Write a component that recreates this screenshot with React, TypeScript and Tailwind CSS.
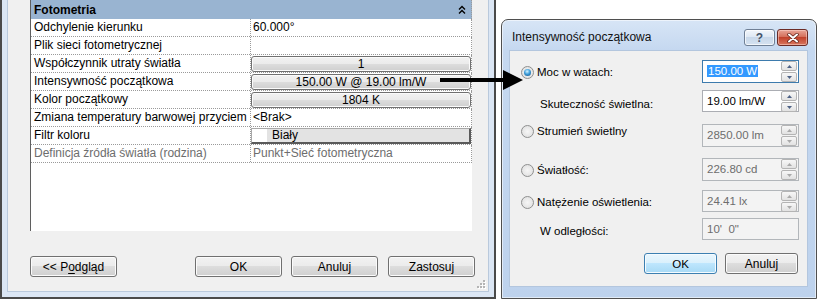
import React from "react";

const winBtn =
  "flex items-center justify-center border border-[#707070] rounded-[3px] bg-[linear-gradient(to_bottom,#f2f2f2_0%,#ebebeb_50%,#dddddd_50%,#cfcfcf_100%)] shadow-[inset_0_0_0_1px_#fbfbfb] text-[12px] leading-[14px] text-black";

type Row = { label: string; value: string; kind: "text" | "button" | "swatch" | "grey" };

const rows: Row[] = [
  { label: "Odchylenie kierunku", value: "60.000°", kind: "text" },
  { label: "Plik sieci fotometrycznej", value: "", kind: "text" },
  { label: "Współczynnik utraty światła", value: "1", kind: "button" },
  { label: "Intensywność początkowa", value: "150.00 W @ 19.00 lm/W", kind: "button" },
  { label: "Kolor początkowy", value: "1804 K", kind: "button" },
  { label: "Zmiana temperatury barwowej przyciem", value: "<Brak>", kind: "text" },
  { label: "Filtr koloru", value: "Biały", kind: "swatch" },
  { label: "Definicja źródła światła (rodzina)", value: "Punkt+Sieć fotometryczna", kind: "grey" },
];

function PropRow({ r }: { r: Row }) {
  const grey = r.kind === "grey";
  return (
    <div className="flex h-[18px] border-b border-r border-dotted border-[#9a9a9a]">
      <div
        className={`w-[220px] shrink-0 border-r border-dotted border-[#9a9a9a] pl-[3px] text-[12px] leading-[17px] whitespace-nowrap overflow-hidden ${
          grey ? "text-[#6d6d6d]" : "text-black"
        }`}
      >
        {r.label}
      </div>
      <div className="flex-1 min-w-0">
        {r.kind === "text" && (
          <div className="pl-[2px] text-[12px] leading-[17px] text-black whitespace-nowrap">{r.value}</div>
        )}
        {r.kind === "grey" && (
          <div className="pl-[2px] text-[12px] leading-[17px] text-[#6d6d6d] whitespace-nowrap">{r.value}</div>
        )}
        {r.kind === "button" && (
          <div className="pt-[1px]">
            <div className={`${winBtn} h-[16px] text-[12px]`}>{r.value}</div>
          </div>
        )}
        {r.kind === "swatch" && (
          <div className="pt-[1px]">
            <div className="flex h-[16px] border-t border-l border-[#a8a8a8] border-b-2 border-r-2 border-b-[#5a5a5a] border-r-[#5a5a5a] bg-[#e3e3e3]">
              <div className="w-[15px] h-full bg-white" />
              <div className="pl-[5px] text-[12px] leading-[13px] text-black">{r.value}</div>
            </div>
          </div>
        )}
      </div>
    </div>
  );
}

function LeftWindow() {
  return (
    <div className="w-[496px] h-[299px] shrink-0 border-l-2 border-r-2 border-b-2 border-[#4a4a4a] bg-[#dbe6f4] flex flex-col px-[5px] pb-[5px]">
      <div className="relative flex-1 bg-[#f0f0f0] border-l border-r border-b border-[#b9c9dc] flex flex-col">
        <div className="ml-[22px] w-[442px] h-[231px] bg-white border-l border-[#5f5f5f] flex flex-col">
          <div className="h-[19px] bg-[#99b4d1] flex items-center pl-[3px] pr-[5px] border-r border-dotted border-[#9a9a9a]">
            <span className="text-[12px] font-bold leading-[14px] text-black">Fotometria</span>
            <svg className="ml-auto" width="8" height="9" viewBox="0 0 8 9">
              <polyline points="1,4.5 4,1.5 7,4.5" fill="none" stroke="#000" strokeWidth="1.4" />
              <polyline points="1,8.5 4,5.5 7,8.5" fill="none" stroke="#000" strokeWidth="1.4" />
            </svg>
          </div>
          {rows.map((r, i) => (
            <PropRow key={i} r={r} />
          ))}
        </div>
        <div className="mt-[25px] flex h-[21px]">
          <div className={`${winBtn} ml-[22px] w-[87px]`}>
            &lt;&lt; P<span className="underline underline-offset-2">o</span>dgląd
          </div>
          <div className={`${winBtn} ml-[78px] w-[87px]`}>OK</div>
          <div className={`${winBtn} ml-[9px] w-[87px]`}>Anuluj</div>
          <div className={`${winBtn} ml-[10px] w-[87px]`}>Zastosuj</div>
        </div>
        <svg className="absolute right-[2px] bottom-[2px]" width="9" height="9" viewBox="0 0 9 9">
          {[
            [6, 0],
            [3, 3],
            [6, 3],
            [0, 6],
            [3, 6],
            [6, 6],
          ].map(([x, y], i) => (
            <g key={i}>
              <rect x={x + 1} y={y + 1} width="2" height="2" fill="#ffffff" />
              <rect x={x} y={y} width="2" height="2" fill="#b4b4b4" />
            </g>
          ))}
        </svg>
      </div>
    </div>
  );
}

function Spinner({ disabled }: { disabled?: boolean }) {
  const fill = disabled ? "#a9a9a9" : "#4d6185";
  const b =
    "h-[10px] w-[16px] flex items-center justify-center border border-[#b4b4b4] rounded-[2px] bg-[linear-gradient(to_bottom,#f7f7f7,#e2e2e2)]";
  return (
    <div className="flex flex-col gap-[1px] pt-[0px] pr-[1px] ml-auto">
      <div className={b}>
        <svg width="5" height="3" viewBox="0 0 5 3">
          <path d="M0 3 L2.5 0 L5 3 Z" fill={fill} />
        </svg>
      </div>
      <div className={b}>
        <svg width="5" height="3" viewBox="0 0 5 3">
          <path d="M0 0 L2.5 3 L5 0 Z" fill={fill} />
        </svg>
      </div>
    </div>
  );
}

function NumBox({
  value,
  disabled,
  selected,
  focused,
  spinner = true,
}: {
  value: string;
  disabled?: boolean;
  selected?: boolean;
  focused?: boolean;
  spinner?: boolean;
}) {
  const border = focused ? "border-[#3d7bad]" : disabled ? "border-[#b2b6ba]" : "border-[#abadb3]";
  const bg = disabled ? "bg-[#f3f3f3]" : "bg-white";
  return (
    <div className={`w-[97px] h-full shrink-0 border ${border} ${bg} flex items-start`}>
      <div className={`pl-[4px] pt-[3px] text-[11.5px] leading-[14px] whitespace-pre ${disabled ? "text-[#6d6d6d]" : "text-black"}`}>
        {selected ? <span className="bg-[#3399ff] text-white px-[1px]">{value}</span> : value}
      </div>
      {spinner && <Spinner disabled={disabled} />}
    </div>
  );
}

function Radio({ checked }: { checked?: boolean }) {
  return (
    <div className="w-[13px] h-[13px] shrink-0 rounded-full border border-[#8e8f8f] bg-[radial-gradient(circle_at_50%_50%,#f6f6f6_0%,#dcdcdc_100%)] flex items-center justify-center">
      {checked && (
        <div className="w-[7px] h-[7px] rounded-full bg-[radial-gradient(circle_at_45%_35%,#d4f3ff_0%,#40a0dc_45%,#0d4a80_100%)]" />
      )}
    </div>
  );
}

function Dialog() {
  const label = "text-[11.5px] leading-[14px] text-black whitespace-nowrap";
  return (
    <div className="ml-[5px] mt-[19px] w-[316px] h-[280px] shrink-0 border border-[#4f4f4f] rounded-t-[7px] bg-[linear-gradient(to_bottom,#d7e5f6_0px,#c5d8f0_30px,#bdd2ed_100%)] shadow-[inset_0_0_0_1px_rgba(255,255,255,0.55)] flex flex-col">
      <div className="h-[30px] flex items-start shrink-0">
        <div className="ml-[10px] mt-[10px] text-[12px] leading-[14px] text-[#111]">Intensywność początkowa</div>
        <div className="ml-auto mt-[9px] mr-[8px] flex gap-[2px]">
          <div className="w-[31px] h-[17px] rounded-[3px] border border-[#6f7f95] bg-[linear-gradient(to_bottom,#f2f6fb_0%,#dde7f3_50%,#c9d8ea_50%,#d5e2f1_100%)] shadow-[inset_0_0_0_1px_rgba(255,255,255,0.7)] flex items-center justify-center text-[12px] font-bold leading-[12px] text-[#44546a]">
            ?
          </div>
          <div className="w-[31px] h-[17px] rounded-[3px] border border-[#6b2b26] bg-[linear-gradient(to_bottom,#e8a597_0%,#d26a55_50%,#c1422c_50%,#d8765e_100%)] shadow-[inset_0_0_0_1px_rgba(255,220,210,0.5)] flex items-center justify-center">
            <svg width="12" height="10" viewBox="0 0 12 10">
              <path d="M2 1.5 L10 8.5 M10 1.5 L2 8.5" stroke="#5a1d14" strokeWidth="3.4" strokeLinecap="round" />
              <path d="M2 1.5 L10 8.5 M10 1.5 L2 8.5" stroke="#ffffff" strokeWidth="2" strokeLinecap="round" />
            </svg>
          </div>
        </div>
      </div>
      <div className="ml-[7px] mr-[8px] h-[237px] bg-[#f0f0f0] border border-[#b3c6de] flex flex-col pt-[9px]">
        <div className="flex h-[23px]">
          <div className="w-[192px] pl-[11px] pt-[5px] flex items-center gap-[3px] self-start">
            <Radio checked />
            <span className={label}>Moc w watach:</span>
          </div>
          <NumBox value="150.00 W" selected focused />
        </div>
        <div className="flex h-[22px] mt-[7px]">
          <div className="w-[192px] pl-[30px] pt-[1px]">
            <span className={label}>Skuteczność świetlna:</span>
          </div>
          <NumBox value="19.00 lm/W" />
        </div>
        <div className="flex h-[23px] mt-[12px]">
          <div className="w-[192px] pl-[11px] pt-[0px] flex items-center gap-[3px] self-start">
            <Radio />
            <span className={label}>Strumień świetlny</span>
          </div>
          <NumBox value="2850.00 lm" disabled />
        </div>
        <div className="flex h-[23px] mt-[11px]">
          <div className="w-[192px] pl-[11px] pt-[5px] flex items-center gap-[3px] self-start">
            <Radio />
            <span className={label}>Światłość:</span>
          </div>
          <NumBox value="226.80 cd" disabled />
        </div>
        <div className="flex h-[22px] mt-[9px]">
          <div className="w-[192px] pl-[11px] pt-[5px] flex items-center gap-[3px] self-start">
            <Radio />
            <span className={label}>Natężenie oświetlenia:</span>
          </div>
          <NumBox value="24.41 lx" disabled />
        </div>
        <div className="flex h-[22px] mt-[6px]">
          <div className="w-[192px] pl-[30px] pt-[0px]">
            <span className={label}>W odległości:</span>
          </div>
          <NumBox value={`10'  0"`} disabled spinner={false} />
        </div>
        <div className="flex justify-end gap-[8px] pr-[9px] mt-[13px] h-[21px]">
          <div className="w-[73px] flex items-center justify-center border border-[#3c7fb1] rounded-[3px] bg-[linear-gradient(to_bottom,#eaf6fd_0%,#d9f0fc_50%,#bee6fd_50%,#a7d9f5_100%)] shadow-[inset_0_0_0_1px_#f4fbff] text-[11.5px] leading-[14px] text-black">
            OK
          </div>
          <div className={`${winBtn} w-[73px] text-[11.5px]`}>Anuluj</div>
        </div>
      </div>
    </div>
  );
}

function Arrow() {
  return (
    <svg className="absolute left-[438px] top-[68px]" width="90" height="24" viewBox="0 0 90 24">
      <rect x="2" y="10" width="66" height="4" fill="#000" />
      <polygon points="65,2 85,12 65,22" fill="#000" />
    </svg>
  );
}

export default function App() {
  return (
    <div className="relative w-[818px] h-[300px] bg-white overflow-hidden font-['Liberation_Sans',Arial,sans-serif] text-black flex items-start">
      <LeftWindow />
      <Dialog />
      <Arrow />
    </div>
  );
}
